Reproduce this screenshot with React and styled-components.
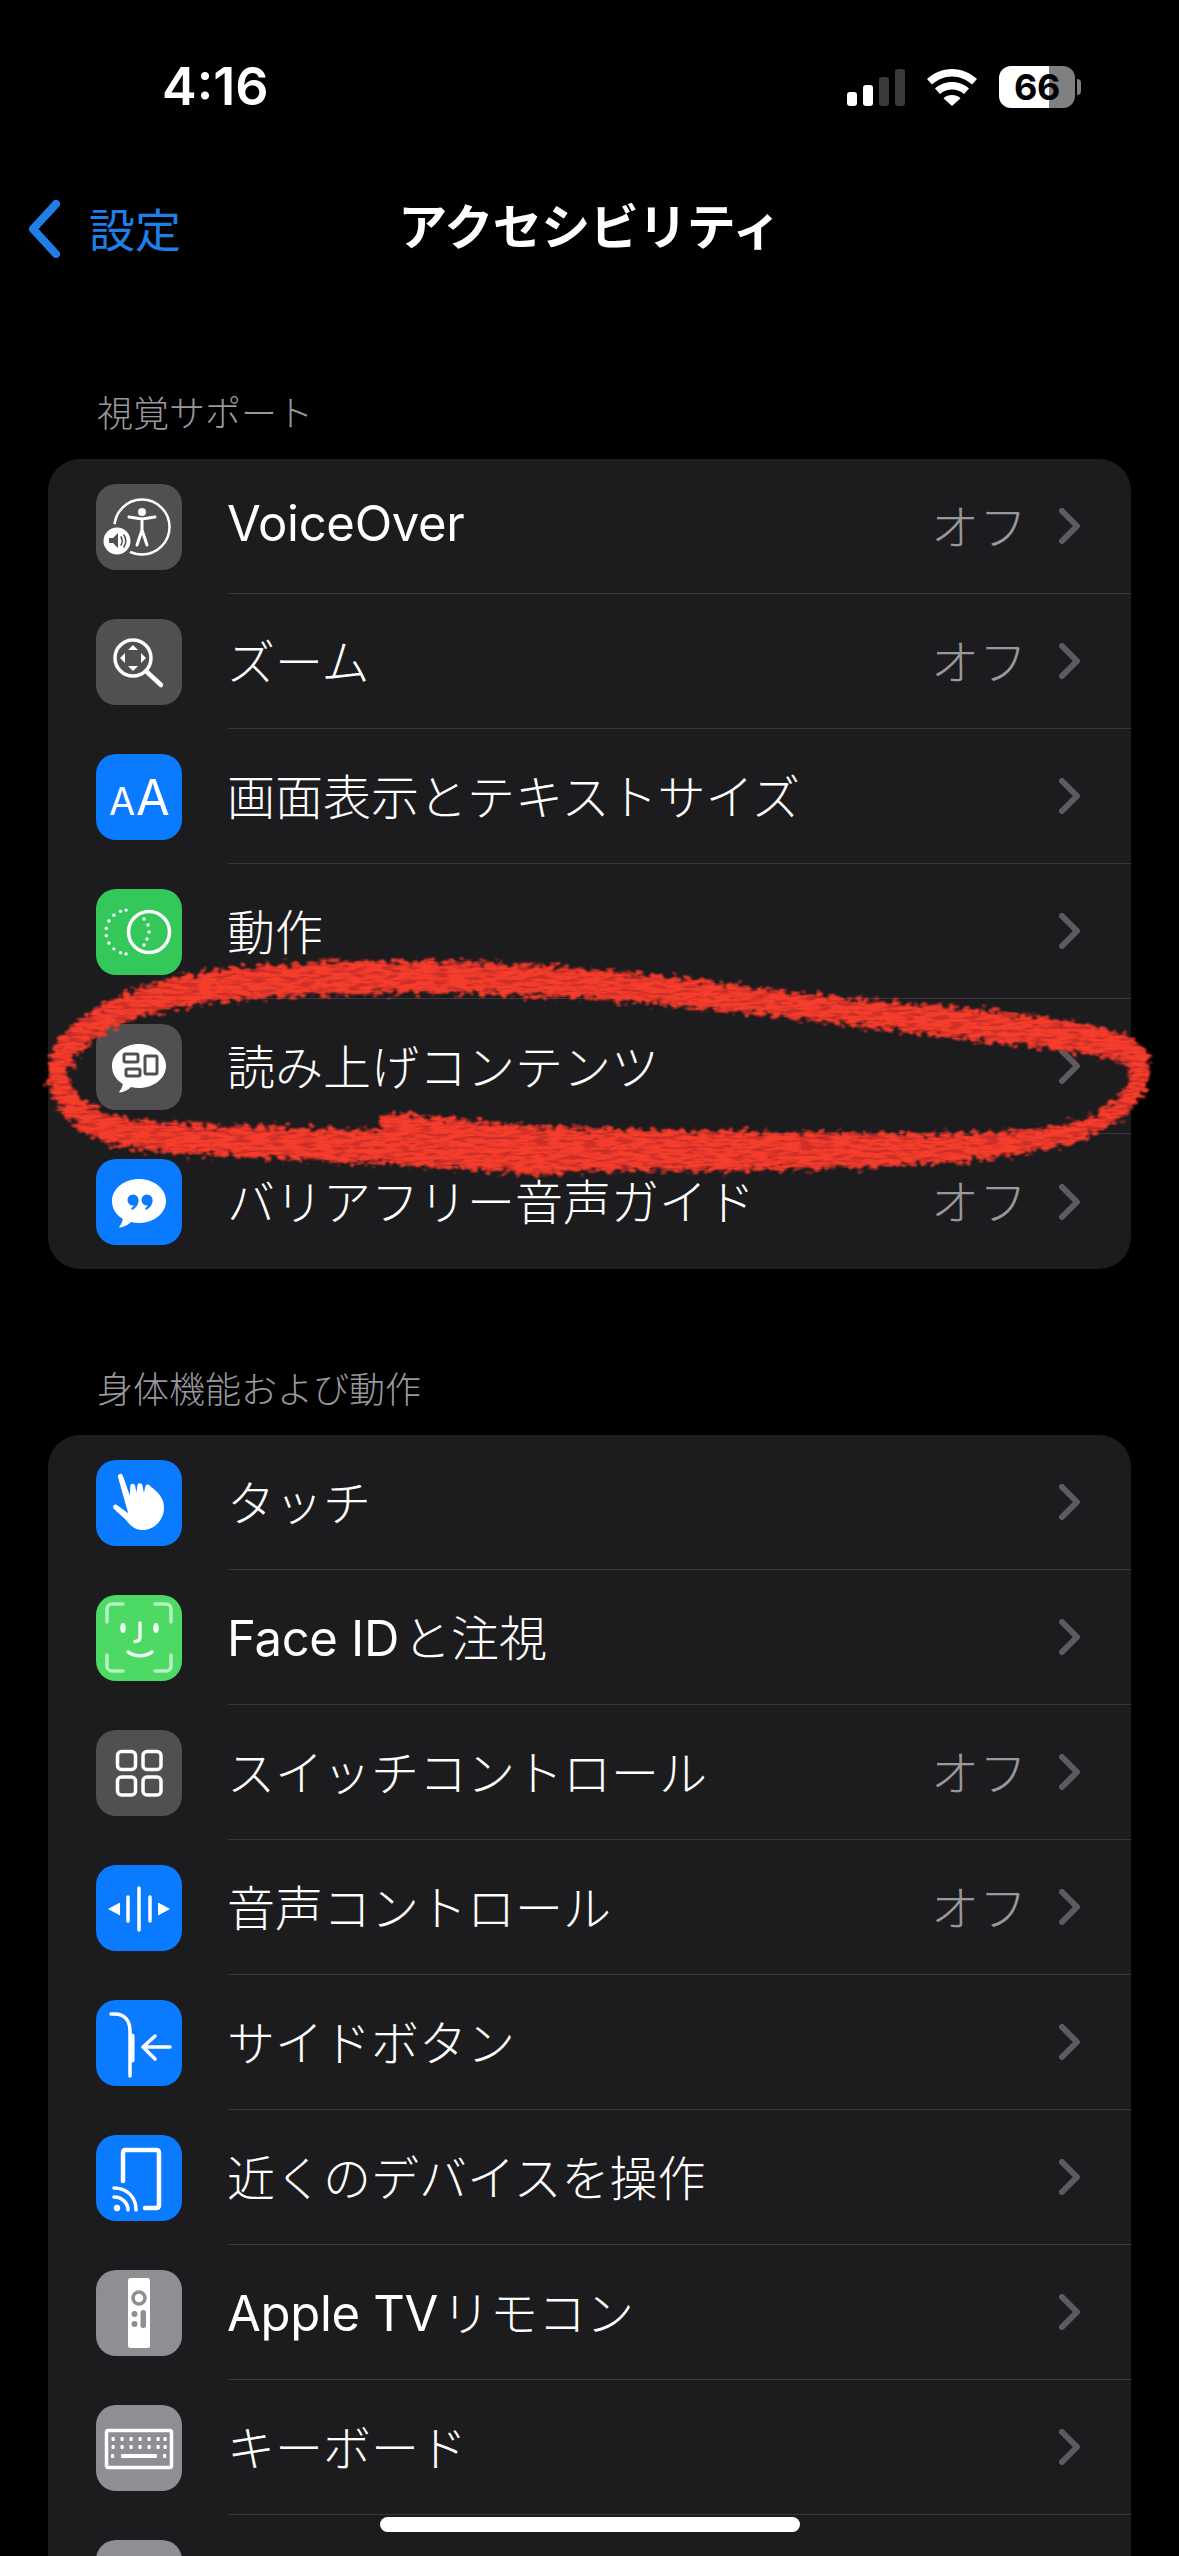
import React from 'react';
import styled, { createGlobalStyle } from 'styled-components';

const GlobalStyle = createGlobalStyle`
  html, body {
    margin: 0;
    padding: 0;
    background: #000;
  }
  #root {
    width: 1179px;
  }
`;

const fontStack = `Inter, "Noto Sans CJK JP", "Noto Sans", sans-serif`;

const Page = styled.div`
  position: relative;
  width: 1179px;
  height: 2556px;
  overflow: hidden;
  background: #000;
  color: #fff;
  font-family: ${fontStack};
`;

const StatusBar = styled.div`
  display: flex;
  align-items: center;
  justify-content: space-between;
  height: 44px;
  padding: 65px 98px 0 162px;
`;

const Time = styled.div`
  font-size: 52px;
  font-weight: 600;
  letter-spacing: 0;
  line-height: 44px;
`;

const StatusIcons = styled.div`
  display: flex;
  align-items: center;
  gap: 22px;
`;

const Signal = styled.div`
  display: flex;
  align-items: flex-end;
  gap: 6px;
  height: 37px;
`;

const SignalBar = styled.span`
  width: 10px;
  height: ${(p) => p.$h}px;
  border-radius: 3px;
  background: ${(p) => (p.$on ? '#fff' : '#3a3a3c')};
`;

const Battery = styled.div`
  position: relative;
  display: flex;
  align-items: center;
  justify-content: center;
  width: 76px;
  height: 42px;
  border-radius: 12px;
  background: linear-gradient(90deg, #fff 0 66%, #808080 66% 100%);
  color: #000;
  font-size: 36px;
  font-weight: 700;
  letter-spacing: -0.5px;
  margin-right: 6px;

  &::after {
    content: '';
    position: absolute;
    left: 78px;
    top: 13px;
    width: 4px;
    height: 16px;
    border-radius: 0 8px 8px 0;
    background: #808080;
  }
`;

const NavBar = styled.div`
  position: relative;
  display: flex;
  align-items: center;
  justify-content: center;
  height: 64px;
  margin-top: 82px;
`;

const BackLink = styled.div`
  position: absolute;
  left: 28px;
  top: 3px;
  display: flex;
  align-items: center;
  gap: 29px;
  color: #1f7fe6;
  font-size: 46px;
  font-weight: 400;
`;

const BackText = styled.span`
  padding-bottom: 4px;
`;

const Title = styled.div`
  font-size: 49px;
  font-weight: 700;
  letter-spacing: -0.5px;
`;

const SectionHeader = styled.div`
  padding-left: 97px;
  color: #98989d;
  font-size: 36px;
  font-weight: 300;
  line-height: 44px;
  margin-top: ${(p) => p.$top}px;
  margin-bottom: 23px;
`;

const Card = styled.div`
  margin: 0 48px;
  border-radius: 32px;
  background: #1c1c1e;
`;

const Row = styled.div`
  display: flex;
  align-items: center;
  height: 135px;
  padding-left: 48px;
`;

const IconTile = styled.div`
  flex: none;
  width: 86px;
  height: 86px;
  border-radius: 20px;
  background: ${(p) => p.$bg};

  svg {
    display: block;
  }
`;

const RowBody = styled.div`
  flex: 1;
  align-self: stretch;
  display: flex;
  align-items: center;
  margin-left: 46px;
  padding-right: 50px;
  border-bottom: ${(p) => (p.$last ? 'none' : '1px solid #38383a')};
  box-sizing: border-box;
`;

const Label = styled.div`
  flex: 1;
  margin-left: -1px;
  padding-bottom: 5px;
  font-size: 48px;
  font-weight: 300;
  white-space: nowrap;
`;

const Latin = styled.span`
  font-size: 49px;
  font-weight: 400;
  letter-spacing: -0.3px;
  margin-right: ${(p) => (p.$spaced ? 4 : 0)}px;
`;

const Value = styled.div`
  padding-bottom: 5px;
  color: #98989d;
  font-size: 48px;
  font-weight: 300;
  margin-right: 32px;
`;

const HomeIndicator = styled.div`
  position: absolute;
  left: 380px;
  top: 2517px;
  width: 420px;
  height: 15px;
  border-radius: 8px;
  background: #fff;
`;

const Scribble = styled.svg`
  position: absolute;
  left: 0;
  top: 0;
  pointer-events: none;
`;

const Svg = ({ children }) => (
  <svg width="86" height="86" viewBox="0 0 86 86" fill="none">
    {children}
  </svg>
);

const Wifi = () => (
  <svg width="50" height="37" viewBox="0 0 50 37">
    <path d="M25 0C15.500 0 7 3.700 0 10l5 5.500C10.500 10.500 17.500 7.500 25 7.500s14.500 3 20 8l5-5.500C43 3.700 34.500 0 25 0z" fill="#fff" />
    <path d="M25 13c-6.500 0-12.500 2.500-17 6.500l5 5.500c3.200-2.800 7.400-4.500 12-4.500s8.800 1.700 12 4.500l5-5.500C37.500 15.500 31.500 13 25 13z" fill="#fff" />
    <path d="M25 26c-3.300 0-6.200 1.200-8.500 3.200L25 37l8.500-7.800C31.200 27.200 28.300 26 25 26z" fill="#fff" />
  </svg>
);

const BackChevron = () => (
  <svg width="32" height="58" viewBox="0 0 32 58" fill="none">
    <path d="M28 4L5 29l23 25" stroke="#1f7fe6" strokeWidth="8" strokeLinecap="round" strokeLinejoin="round" />
  </svg>
);

const RowChevron = () => (
  <svg width="22" height="36" viewBox="0 0 22 36" fill="none">
    <path d="M3 3l15 15L3 33" stroke="#5c5c60" strokeWidth="6" strokeLinecap="round" strokeLinejoin="round" />
  </svg>
);

const VoiceOverIcon = () => (
  <Svg>
    <circle cx="46" cy="43" r="27.500" stroke="#fff" strokeWidth="2.500" />
    <circle cx="46" cy="28" r="4" fill="#fff" />
    <path d="M33 33l13 2 13-2M46 35v11M46 46l-5 15M46 46l5 15" stroke="#fff" strokeWidth="3" strokeLinecap="round" strokeLinejoin="round" />
    <circle cx="21" cy="57" r="17" fill="#505052" />
    <circle cx="21" cy="57" r="13.500" fill="#fff" />
    <path d="M13 54h4l5-5v15l-5-5h-4z" fill="#505052" />
    <path d="M25 53c1.500 2.500 1.500 5.500 0 8M28 51c2.200 3.700 2.200 8.300 0 12" stroke="#505052" strokeWidth="1.500" strokeLinecap="round" />
  </Svg>
);

const ZoomIcon = () => (
  <Svg>
    <circle cx="37" cy="39" r="18" stroke="#fff" strokeWidth="3.500" />
    <path d="M51 53l14 13" stroke="#fff" strokeWidth="4.500" strokeLinecap="round" />
    <path d="M37 26l5 5H32zM37 52l5-5H32zM24 39l5-5v10zM50 39l-5-5v10z" fill="#fff" />
  </Svg>
);

const TextSizeIcon = () => (
  <Svg>
    <text x="13" y="61" fill="#fff" fontFamily="Inter, sans-serif" fontSize="38" fontWeight="400">A</text>
    <text x="40" y="61" fill="#fff" fontFamily="Inter, sans-serif" fontSize="49" fontWeight="400">A</text>
  </Svg>
);

const MotionIcon = () => {
  const dots = [110, 130, 150, 170, 190, 210, 230, 250, 95, 265].map((deg) => {
    const r = (deg * Math.PI) / 180;
    return [32 + 22 * Math.cos(r), 43 - 22 * Math.sin(r)];
  });
  return (
    <Svg>
      {dots.map(([x, y], i) => (
        <circle key={i} cx={x} cy={y} r="1.700" fill="#fff" />
      ))}
      <circle cx="48" cy="30" r="1.700" fill="#fff" />
      <circle cx="52" cy="36" r="1.700" fill="#fff" />
      <circle cx="53" cy="43" r="1.700" fill="#fff" />
      <circle cx="51" cy="50" r="1.700" fill="#fff" />
      <circle cx="48" cy="56" r="1.700" fill="#fff" />
      <circle cx="53" cy="43" r="20.500" stroke="#fff" strokeWidth="3.500" />
    </Svg>
  );
};

const BubbleShape = ({ fill }) => (
  <path
    d="M43 20c15 0 27 9.800 27 22s-12 22-27 22c-2.800 0-5.500-.3-8-1-2.800 2.800-6.500 5-11 5.500-.8.100-1-.7-.5-1.200 1.800-2 2.900-4.500 3.300-7.400C20 56 16 49.500 16 42c0-12.200 12-22 27-22z"
    fill={fill}
  />
);

const SpokenIcon = () => (
  <Svg>
    <BubbleShape fill="#fff" />
    <g stroke="#505052" strokeWidth="3">
      <rect x="28" y="30" width="14" height="8" rx="1.500" />
      <rect x="30" y="45" width="14" height="7" rx="1.500" />
      <rect x="49" y="32" width="12" height="18" rx="1.500" />
    </g>
  </Svg>
);

const GuideIcon = () => (
  <Svg>
    <BubbleShape fill="#fff" />
    <g fill="#0a7aff">
      <circle cx="37" cy="41" r="5.500" />
      <circle cx="51" cy="41" r="5.500" />
      <path d="M42.500 41c0 5-2.500 8-6.500 10l-1-1.500c2-1.500 3-3 3-5zM56.500 41c0 5-2.500 8-6.500 10l-1-1.500c2-1.500 3-3 3-5z" />
    </g>
  </Svg>
);

const TouchIcon = () => (
  <Svg>
    <path
      d="M22 17c-.8-3 3.500-4.500 4.800-1.500l7 20 .5-9.500c.2-3 4.300-3 4.800-.2l1.300 7 1-7.500c.4-2.800 4.300-2.800 5 0l1.500 7.500 1.500-6.500c.7-2.500 4.300-2.200 5 .3C62 32 68 38 68 48c0 11-9 22-21 22-9 0-13-5-17-10L18 49c-2.300-2.300.5-5.800 3.200-3.800l11 8z"
      fill="#fff"
    />
  </Svg>
);

const FaceIdIcon = () => (
  <Svg>
    <g stroke="#fff" strokeOpacity="0.6" strokeWidth="3.500" strokeLinecap="round">
      <path d="M11 27V14c0-3 2-5 5-5h11M59 9h11c3 0 5 2 5 5v13M75 60v11c0 3-2 5-5 5H59M27 76H16c-3 0-5-2-5-5V60" />
    </g>
    <ellipse cx="27" cy="33" rx="2.800" ry="5" fill="#fff" fillOpacity="0.9" />
    <ellipse cx="60" cy="33" rx="2.800" ry="5" fill="#fff" fillOpacity="0.9" />
    <path d="M44 28v14c0 3-1.500 4.500-5 4.500" stroke="#fff" strokeOpacity="0.9" strokeWidth="3.500" strokeLinecap="round" />
    <path d="M32 57c7 5 17 5 24 0" stroke="#fff" strokeOpacity="0.9" strokeWidth="3.500" strokeLinecap="round" />
  </Svg>
);

const SwitchIcon = () => (
  <Svg>
    <g stroke="#fff" strokeWidth="3.500">
      <rect x="21.500" y="21.500" width="18" height="18" rx="4" />
      <rect x="47" y="21.500" width="18" height="18" rx="4" />
      <rect x="21.500" y="47" width="18" height="18" rx="4" />
      <rect x="47" y="47" width="18" height="18" rx="4" />
    </g>
  </Svg>
);

const VoiceControlIcon = () => (
  <Svg>
    <path d="M43 23v42M32 32v24M54 32v24" stroke="#fff" strokeWidth="3.500" strokeLinecap="round" />
    <path d="M12 44l12-6.500v13zM74 44l-12-6.500v13z" fill="#fff" />
  </Svg>
);

const SideButtonIcon = () => (
  <Svg>
    <path d="M15 14h4c9 0 15 6 15 17v45" stroke="#fff" strokeWidth="3.500" strokeLinecap="round" />
    <path d="M36 36v24" stroke="#fff" strokeWidth="5" strokeLinecap="round" />
    <path d="M74 47H47M59 36L47 47l12 12" stroke="#fff" strokeWidth="3.500" strokeLinecap="round" strokeLinejoin="round" />
  </Svg>
);

const NearbyIcon = () => (
  <Svg>
    <path d="M27 46V18c0-2 1-3 3-3h30c2 0 3 1 3 3v52c0 2-1 3-3 3H49" stroke="#fff" strokeWidth="4.500" strokeLinecap="round" />
    <circle cx="21" cy="73" r="3.200" fill="#fff" />
    <path d="M18 62c8 0 14 6 14 13M18 53c13 0 22 9 22 22" stroke="#fff" strokeWidth="3.500" strokeLinecap="round" />
  </Svg>
);

const RemoteIcon = () => (
  <Svg>
    <rect x="32" y="8" width="22" height="70" rx="2.500" fill="#fff" />
    <circle cx="43" cy="28" r="6" stroke="#8e8e93" strokeWidth="3.500" />
    <circle cx="38.500" cy="44" r="3" fill="#8e8e93" />
    <circle cx="38.500" cy="54" r="3" fill="#8e8e93" />
    <rect x="44.500" y="40" width="5.500" height="18" rx="2.750" fill="#8e8e93" />
  </Svg>
);

const KeyboardIcon = () => {
  const cols = [17, 26, 35, 44, 53, 62, 69];
  return (
    <Svg>
      <rect x="10.500" y="25.500" width="65" height="37" rx="2" stroke="#fff" strokeWidth="3.500" />
      {[34, 42].map((y) =>
        cols.map((x) => <rect key={`${x}-${y}`} x={x - 1.5} y={y - 2} width="3.200" height="4" rx="1" fill="#fff" />)
      )}
      <rect x="15" y="49" width="3.200" height="4" rx="1" fill="#fff" />
      <rect x="25" y="49" width="36" height="4" rx="1" fill="#fff" />
      <rect x="67" y="49" width="3.200" height="4" rx="1" fill="#fff" />
    </Svg>
  );
};

const GRAY = '#505052';
const BLUE = '#0a7aff';

const visionRows = [
  { id: 'voiceover', label: <Latin>VoiceOver</Latin>, value: 'オフ', bg: GRAY, Icon: VoiceOverIcon },
  { id: 'zoom', label: 'ズーム', value: 'オフ', bg: GRAY, Icon: ZoomIcon },
  { id: 'display', label: '画面表示とテキストサイズ', bg: BLUE, Icon: TextSizeIcon },
  { id: 'motion', label: '動作', bg: '#34c759', Icon: MotionIcon },
  { id: 'spoken', label: '読み上げコンテンツ', bg: GRAY, Icon: SpokenIcon },
  { id: 'guide', label: 'バリアフリー音声ガイド', value: 'オフ', bg: BLUE, Icon: GuideIcon },
];

const motorRows = [
  { id: 'touch', label: 'タッチ', bg: BLUE, Icon: TouchIcon },
  { id: 'face', label: <><Latin $spaced>Face ID</Latin>と注視</>, bg: '#4cd964', Icon: FaceIdIcon },
  { id: 'switch', label: 'スイッチコントロール', value: 'オフ', bg: GRAY, Icon: SwitchIcon },
  { id: 'voice', label: '音声コントロール', value: 'オフ', bg: BLUE, Icon: VoiceControlIcon },
  { id: 'side', label: 'サイドボタン', bg: BLUE, Icon: SideButtonIcon },
  { id: 'nearby', label: '近くのデバイスを操作', bg: BLUE, Icon: NearbyIcon },
  { id: 'tv', label: <><Latin $spaced>Apple TV</Latin>リモコン</>, bg: '#8e8e93', Icon: RemoteIcon },
  { id: 'keyboard', label: 'キーボード', bg: '#8e8e93', Icon: KeyboardIcon },
];

const SettingsRow = ({ label, value, bg, Icon, last }) => (
  <Row>
    <IconTile $bg={bg}>
      <Icon />
    </IconTile>
    <RowBody $last={last}>
      <Label>{label}</Label>
      {value && <Value>{value}</Value>}
      <RowChevron />
    </RowBody>
  </Row>
);

// contours of the red pen stroke, read off a 1.33 x 3 crop starting at y 930
const outerEdge = [
  [58, 420], [85, 295], [175, 175], [300, 110], [500, 92], [680, 100], [880, 138], [1100, 203],
  [1300, 238], [1470, 290], [1525, 350], [1530, 440], [1505, 545], [1440, 635], [1300, 695],
  [1050, 720], [760, 720], [720, 738], [600, 710], [300, 676], [140, 655], [80, 550],
];
const innerEdge = [
  [85, 420], [125, 320], [200, 240], [310, 205], [500, 185], [680, 190], [880, 220], [1100, 275],
  [1300, 330], [1450, 370], [1505, 400], [1500, 480], [1460, 560], [1380, 605], [1200, 615],
  [950, 605], [740, 595], [620, 575], [530, 548], [508, 548], [508, 598], [495, 602], [300, 590],
  [150, 570], [100, 500],
];

const smoothPath = (points) => {
  const pts = points.map(([x, y]) => [x * 0.752, 930 + y / 3]);
  const mid = (a, b) => [(a[0] + b[0]) / 2, (a[1] + b[1]) / 2];
  const start = mid(pts[pts.length - 1], pts[0]);
  let d = `M${start[0]} ${start[1]}`;
  pts.forEach((p, i) => {
    const m = mid(p, pts[(i + 1) % pts.length]);
    d += `Q${p[0]} ${p[1]} ${m[0]} ${m[1]}`;
  });
  return `${d}Z`;
};

const RedCircle = () => (
  <Scribble width="1179" height="1300" viewBox="0 0 1179 1300" fill="none">
    <defs>
      <filter id="rough" x="-5%" y="-30%" width="110%" height="160%" colorInterpolationFilters="sRGB">
        <feTurbulence type="fractalNoise" baseFrequency="0.14 0.24" numOctaves="4" seed="4" result="noise" />
        <feDisplacementMap in="SourceGraphic" in2="noise" scale="20" xChannelSelector="R" yChannelSelector="G" result="shape" />
        <feGaussianBlur in="shape" stdDeviation="1.200" result="soft" />
        <feTurbulence type="fractalNoise" baseFrequency="0.06 0.3" numOctaves="3" seed="9" result="grain" />
        <feColorMatrix
          in="grain"
          type="matrix"
          values="0 0 0 0 0.96  0 0 0 0 0.24  0 0 0 0 0.17  4 0 0 0 -1.2"
          result="bright"
        />
        <feComposite in="bright" in2="soft" operator="in" result="streaks" />
        <feMerge>
          <feMergeNode in="soft" />
          <feMergeNode in="streaks" />
        </feMerge>
      </filter>
    </defs>
    <path
      d={`${smoothPath(outerEdge)}${smoothPath(innerEdge)}`}
      fill="#cc2e28"
      fillRule="evenodd"
      filter="url(#rough)"
    />
  </Scribble>
);

const App = () => (
  <Page>
    <GlobalStyle />
    <StatusBar>
      <Time>4:16</Time>
      <StatusIcons>
        <Signal>
          <SignalBar $h={14} $on />
          <SignalBar $h={21} $on />
          <SignalBar $h={29} />
          <SignalBar $h={37} />
        </Signal>
        <Wifi />
        <Battery>66</Battery>
      </StatusIcons>
    </StatusBar>

    <NavBar>
      <BackLink>
        <BackChevron />
        <BackText>設定</BackText>
      </BackLink>
      <Title>アクセシビリティ</Title>
    </NavBar>

    <SectionHeader $top={137}>視覚サポート</SectionHeader>
    <Card>
      {visionRows.map((row, i) => (
        <SettingsRow key={row.id} {...row} last={i === visionRows.length - 1} />
      ))}
    </Card>

    <SectionHeader $top={99}>身体機能および動作</SectionHeader>
    <Card>
      {motorRows.map((row) => (
        <SettingsRow key={row.id} {...row} />
      ))}
      <Row>
        <IconTile $bg="#8e8e93" />
      </Row>
    </Card>

    <RedCircle />
    <HomeIndicator />
  </Page>
);

export default App;
